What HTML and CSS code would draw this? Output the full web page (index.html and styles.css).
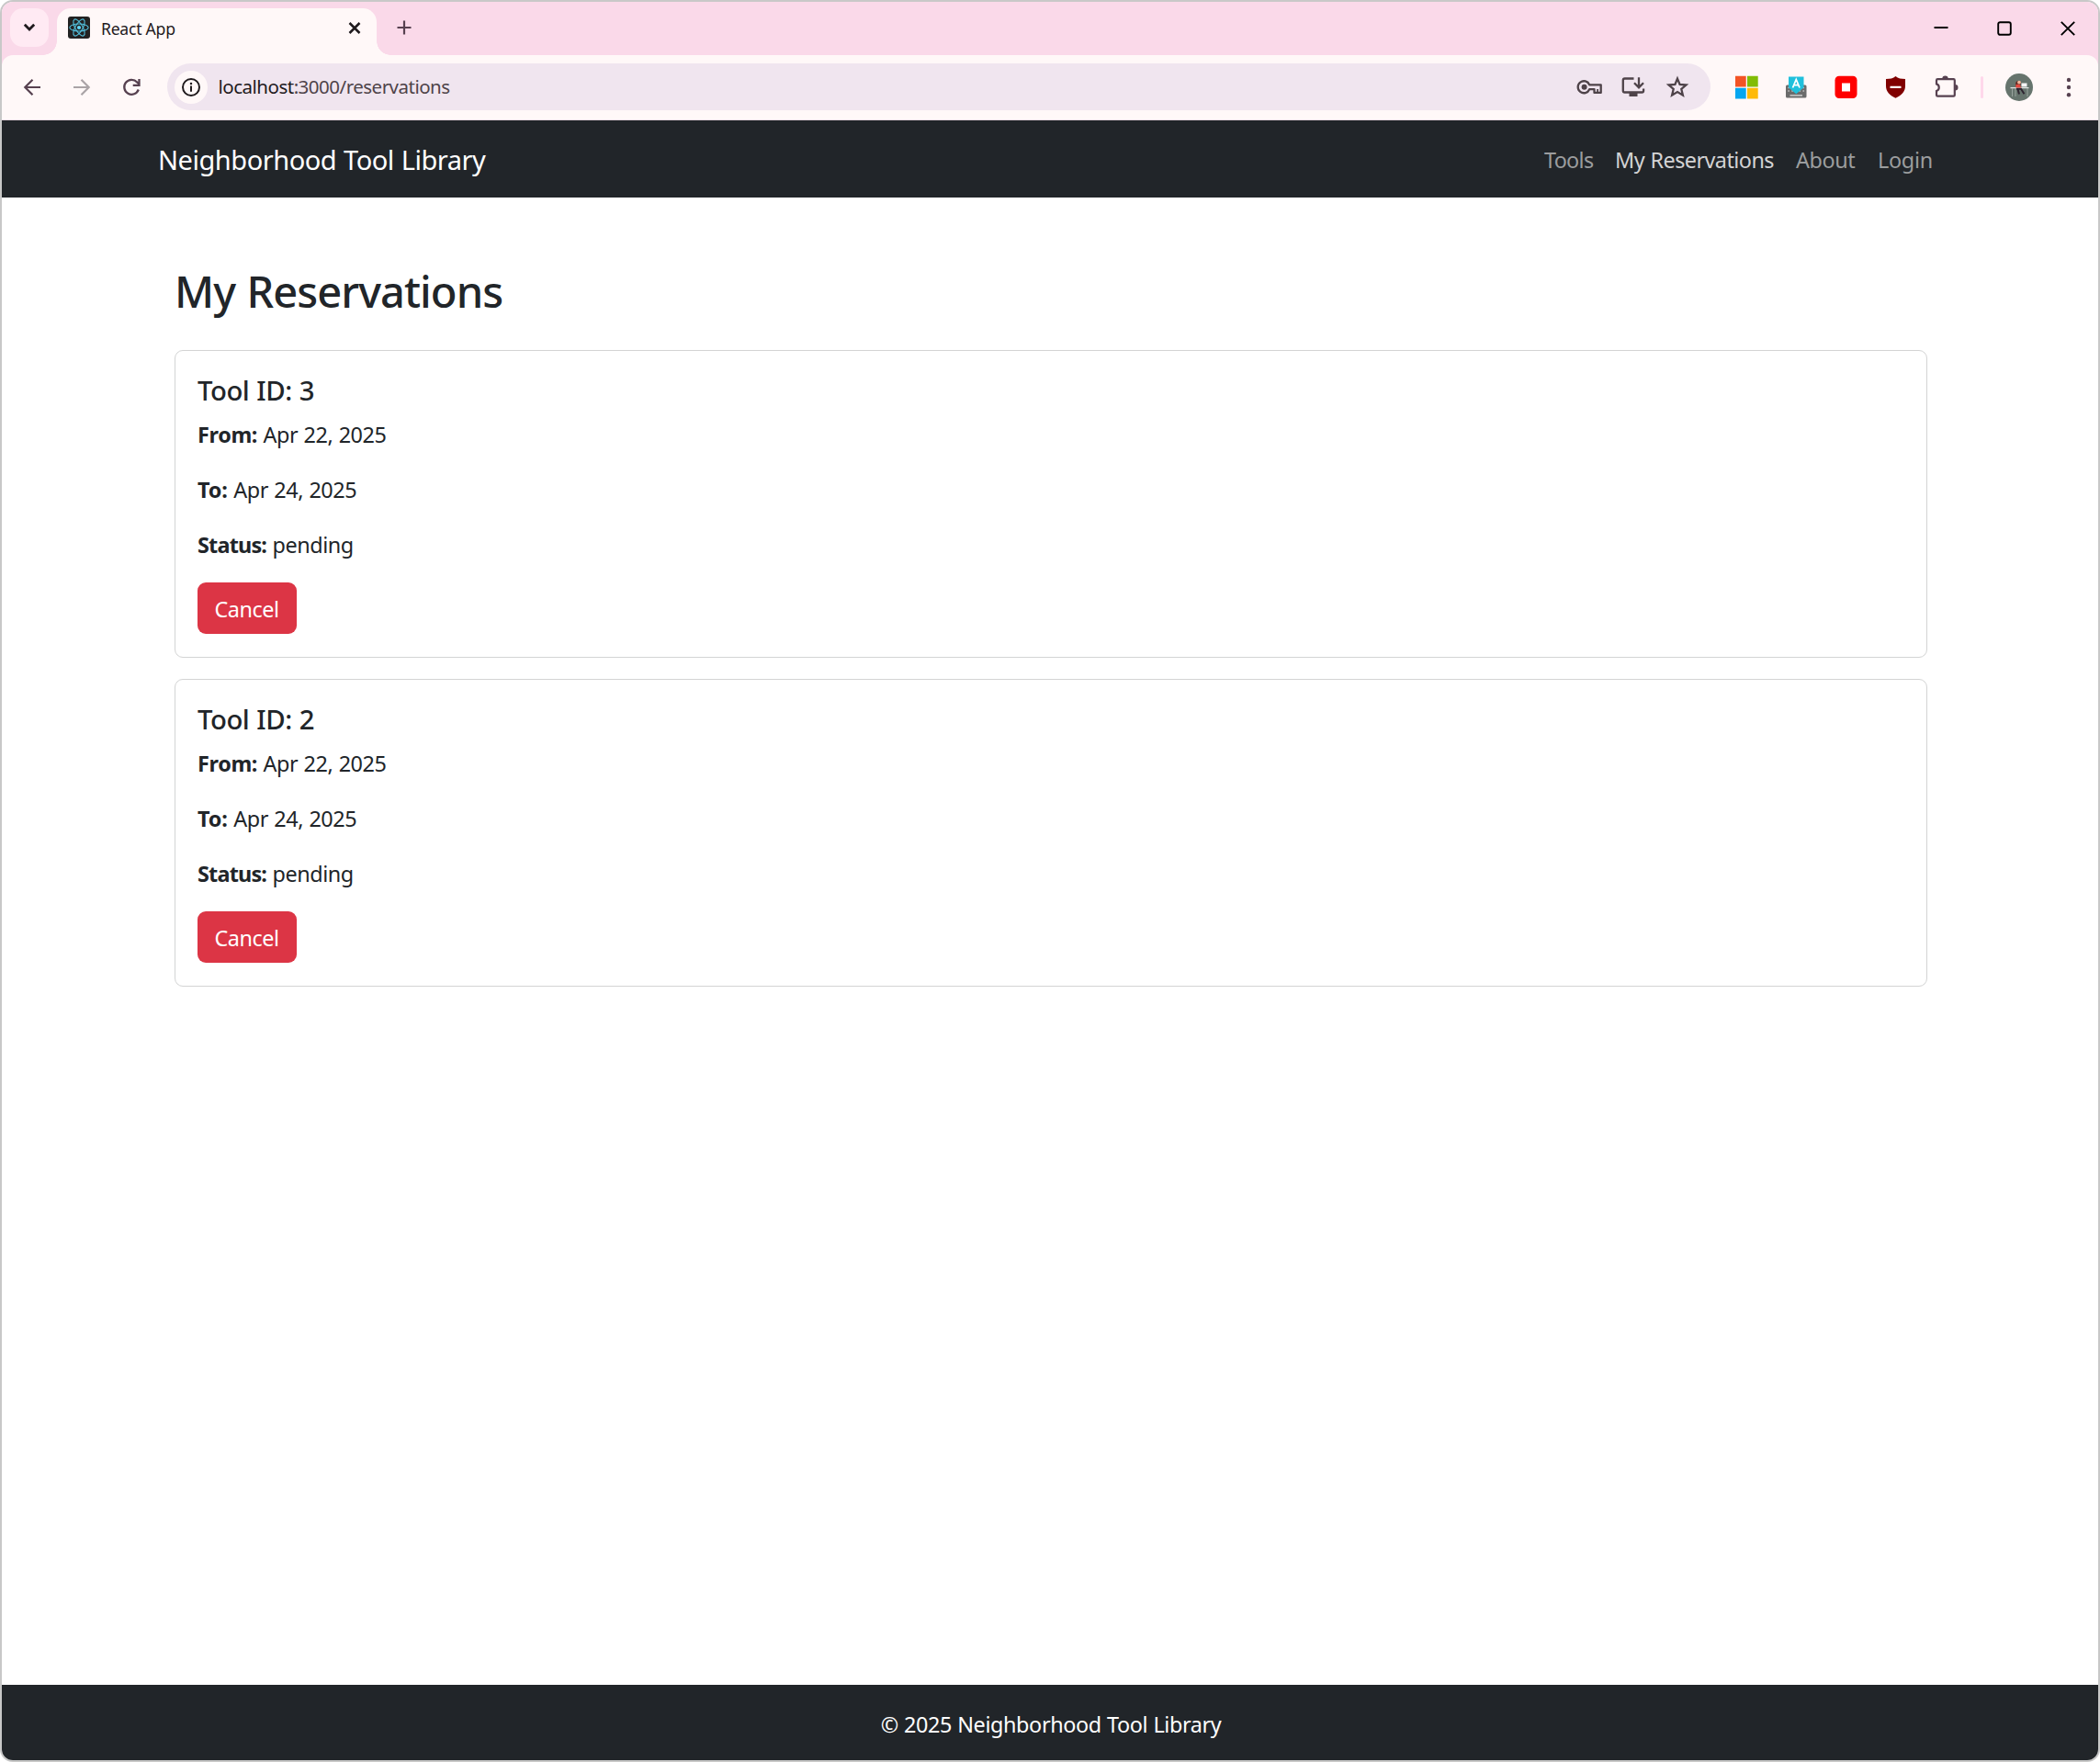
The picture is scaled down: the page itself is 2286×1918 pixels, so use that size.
FILE: index.html
```html
<!DOCTYPE html>
<html lang="en">
<head>
<meta charset="utf-8">
<title>React App</title>
<link rel="stylesheet" href="styles.css">
</head>
<body>
<div class="window">
  <div class="tabstrip">
    <div class="tab-search">
      <svg width="14" height="10" viewBox="0 0 14 10"><path d="M1.800 1.800 7 7l5.200-5.200" fill="none" stroke="#1f1a1d" stroke-width="2.800"/></svg>
    </div>
    <div class="tab">
      <svg class="favicon" width="24" height="24" viewBox="0 0 24 24">
        <rect width="24" height="24" rx="3" fill="#222"/>
        <g fill="none" stroke="#53c1de" stroke-width="1.100">
          <ellipse cx="12" cy="12" rx="10.200" ry="4"/>
          <ellipse cx="12" cy="12" rx="10.200" ry="4" transform="rotate(60 12 12)"/>
          <ellipse cx="12" cy="12" rx="10.200" ry="4" transform="rotate(120 12 12)"/>
        </g>
        <circle cx="12" cy="12" r="2.100" fill="#61dafb"/>
      </svg>
      <span class="tab-title">React App</span>
      <svg width="14" height="14" viewBox="0 0 14 14"><path d="m1.500 1 11 11m0-11-11 11" stroke="#1f1a1d" stroke-width="2.500"/></svg>
    </div>
    <svg class="new-tab" width="16" height="16" viewBox="0 0 16 16"><path d="M8 .500v15M.500 8h15" stroke="#574150" stroke-width="2.200"/></svg>
    <div class="window-controls">
      <svg width="16" height="16" viewBox="0 0 16 16"><path d="M.500 7h15" stroke="#000" stroke-width="2"/></svg>
      <svg width="16" height="16" viewBox="0 0 16 16"><rect x="1.200" y="1.200" width="13.600" height="13.600" rx="2" fill="none" stroke="#000" stroke-width="1.900"/></svg>
      <svg width="16" height="16" viewBox="0 0 16 16"><path d="m.800.800 14.400 14.400m0-14.400L.800 15.200" stroke="#000" stroke-width="1.900"/></svg>
    </div>
  </div>

  <div class="toolbar-bg">
  <div class="toolbar">
    <svg width="30" height="30" viewBox="0 0 30 30"><path d="M24 15H7.500M15.500 6.800 7.300 15l8.200 8.200" fill="none" stroke="#574150" stroke-width="2.200"/></svg>
    <svg width="30" height="30" viewBox="0 0 30 30"><path d="M6 15h16.500M14.500 6.800l8.200 8.200-8.200 8.200" fill="none" stroke="#aaa4a7" stroke-width="2.200"/></svg>
    <svg width="30" height="30" viewBox="0 0 30 30"><path d="M22.800 17.500A8 8 0 1 1 21.200 9.400L23.500 11.700" fill="none" stroke="#574150" stroke-width="2.300"/><path d="M23.500 6v6.800h-6.800" fill="none" stroke="#574150" stroke-width="2.300"/></svg>

    <div class="omnibox">
      <span class="site-info">
        <svg width="22" height="22" viewBox="0 0 22 22"><circle cx="11" cy="11" r="9" fill="none" stroke="#1f1a1d" stroke-width="2"/><path d="M11 9.600v6.200" stroke="#1f1a1d" stroke-width="2"/><circle cx="11" cy="6.900" r="1.250" fill="#1f1a1d"/></svg>
      </span>
      <span class="url"><span class="host">localhost</span>:3000/reservations</span>
      <div class="page-actions">
        <svg width="30" height="30" viewBox="0 0 30 30"><path d="M15.200 12.300A6.500 6.500 0 1 0 15.200 17.200H20.500V20.900H27.700V12.300Z" fill="none" stroke="#4e4349" stroke-width="2.300" stroke-linejoin="round"/><circle cx="9.600" cy="14.700" r="3" fill="#4e4349"/><path d="M24.100 17v4" stroke="#4e4349" stroke-width="1.800"/></svg>
        <svg width="30" height="30" viewBox="0 0 30 30"><path d="M15.500 5.500H5.600a1.800 1.800 0 0 0-1.800 1.800V18.700a1.800 1.800 0 0 0 1.800 1.800H24.300a1.800 1.800 0 0 0 1.800-1.800V16.500M21 4.300V14.500M16 10.300l5 5 5-5" fill="none" stroke="#4e4349" stroke-width="2.300"/><path d="M10.500 21h9v4h-9z" fill="#4e4349"/></svg>
        <svg width="30" height="30" viewBox="0 0 30 30"><path d="m15 5.600 2.600 6.300 6.900.6-5.200 4.500 1.600 6.700-5.900-3.600-5.900 3.600 1.600-6.700-5.200-4.500 6.900-.6Z" fill="none" stroke="#4e4349" stroke-width="2.300"/></svg>
      </div>
    </div>

    <svg width="30" height="30" viewBox="0 0 30 30"><path d="M3 2.700h11.700v11.700H3z" fill="#f35325"/><path d="M16 2.700h11.700v11.700H16z" fill="#81bc06"/><path d="M3 15.700h11.700v11.700H3z" fill="#05a6f0"/><path d="M16 15.700h11.700v11.700H16z" fill="#ffba08"/></svg>
    <svg width="30" height="30" viewBox="0 0 30 30"><rect x="4" y="12.500" width="22.500" height="14" rx="1.500" fill="#6b6b6b"/><path d="M8.500 23.800h13.500" stroke="#e0e0e0" stroke-width="1.300"/><path d="M6.300 15.500h1.600m14.600 0h1.600M6.300 19h1.600m2.400 0h1.600m6.600 0h1.600m2.400 0h1.600" stroke="#c0c0c0" stroke-width="1.600"/><path d="M7 3.500h16.500v11.800l-8.250 7-8.250-7z" fill="#20c0dc"/><path d="m11.500 15.500 3.750-9 3.750 9M12.900 12.600h4.700" fill="none" stroke="#fff" stroke-width="1.800"/></svg>
    <svg width="30" height="30" viewBox="0 0 30 30"><rect x="3.500" y="2.800" width="24" height="24.300" rx="4.500" fill="#f00"/><rect x="11" y="10.500" width="9" height="9" fill="#fff"/></svg>
    <svg width="30" height="30" viewBox="0 0 30 30"><path d="M15.500 3c2.800 2.400 6.200 3 10.500 3v7.500c0 6-3.800 10.200-10.500 13.300C8.800 23.700 5 19.500 5 13.500V6c4.300 0 7.700-.6 10.500-3Z" fill="#800000"/><path d="M9.500 14.800h12" stroke="#fff" stroke-width="2.200"/></svg>
    <svg width="30" height="30" viewBox="0 0 30 30"><path d="M7.300 6.200H24.500a1.300 1.300 0 0 1 1.300 1.300V23.400a1.300 1.300 0 0 1-1.300 1.300H7.300a1.300 1.300 0 0 1-1.300-1.300V19a4 4 0 0 0 0-7.600V7.500a1.300 1.300 0 0 1 1.300-1.300Z" fill="none" stroke="#574150" stroke-width="2.200"/><path d="M12.300 5.700a3.200 3.200 0 0 1 6.400 0ZM26.300 12a3.200 3.200 0 0 1 0 6.400Z" fill="#574150"/></svg>
    <span class="divider"></span>
    <svg width="30" height="30" viewBox="0 0 30 30"><circle cx="15" cy="15" r="15" fill="#66746d"/><path d="M5.500 15.700h20" stroke="#dfe4e1" stroke-width="1.300"/><path d="M7.500 16v9M24 16v9M11 16v9" stroke="#98a39e" stroke-width="1"/><path d="M11.200 10a3.200 3.200 0 0 1 6 0l-1 3.500h-5z" fill="#6a2a22"/><circle cx="15" cy="9.700" r="1.900" fill="#f0b79c"/><path d="M11.500 12h4l2 3.500h-6.200z" fill="#e5483f"/><path d="M12 16.800h5l3.500 5.500M13.500 17l1.500 5.500" fill="none" stroke="#2e2530" stroke-width="2"/><path d="M17.500 10.500h6v4h-6z" fill="#f5f5f5"/></svg>
    <svg width="30" height="30" viewBox="0 0 30 30"><g fill="#574150"><circle cx="15" cy="7" r="2.200"/><circle cx="15" cy="15" r="2.200"/><circle cx="15" cy="23.200" r="2.200"/></g></svg>
  </div>
  </div>

  <nav class="navbar">
    <div class="navbar-inner">
      <span class="brand">Neighborhood Tool Library</span>
      <div class="nav-links">
        <a class="nav-link tools">Tools</a>
        <a class="nav-link reservations active">My Reservations</a>
        <a class="nav-link about">About</a>
        <a class="nav-link login">Login</a>
      </div>
    </div>
  </nav>

  <main class="content">
    <h1>My Reservations</h1>
    <section class="card">
      <h5>Tool ID: 3</h5>
      <p><strong class="from">From:</strong> Apr 22, 2025</p>
      <p><strong class="to">To:</strong> Apr 24, 2025</p>
      <p><strong class="status">Status:</strong> pending</p>
      <button class="cancel">Cancel</button>
    </section>
    <section class="card">
      <h5>Tool ID: 2</h5>
      <p><strong class="from">From:</strong> Apr 22, 2025</p>
      <p><strong class="to">To:</strong> Apr 24, 2025</p>
      <p><strong class="status">Status:</strong> pending</p>
      <button class="cancel">Cancel</button>
    </section>
  </main>

  <footer class="footer">© 2025 Neighborhood Tool Library</footer>
</div>
</body>
</html>
```
FILE: styles.css
```css
* { box-sizing: border-box; }

body {
  margin: 0;
  background: #fff;
  color: #212529;
  font: 23.4px/36px "Noto Sans", "Open Sans", sans-serif;
}

svg { display: block; flex: none; }

.window {
  display: flex;
  flex-direction: column;
  height: 1918px;
  border: 2px solid #c8c8c8;
  border-radius: 14px;
  overflow: hidden;
  background: #fff;
}

/* Tab strip */
.tabstrip {
  display: flex;
  height: 58px;
  padding: 7px 25px 0 9px;
  background: #fad9e9;
}

.tab-search {
  display: flex;
  align-items: center;
  justify-content: center;
  width: 42px;
  height: 42px;
  margin-right: 9px;
  border-radius: 14px;
  background: #ffeaf3;
}

.tab {
  position: relative;
  display: flex;
  align-items: flex-start;
  width: 348px;
  padding: 15px 17px 0 12px;
  border-radius: 15px 15px 0 0;
  background: #fff8f8;
}

.tab::before,
.tab::after {
  content: "";
  position: absolute;
  bottom: 0;
  width: 15px;
  height: 15px;
}

.tab::before {
  left: -15px;
  background: radial-gradient(circle at 0 0, transparent 14.5px, #fff8f8 15px);
}

.tab::after {
  right: -15px;
  background: radial-gradient(circle at 100% 0, transparent 14.5px, #fff8f8 15px);
}

.favicon { margin-top: -6px; }

.tab-title {
  flex: 1;
  margin: -5px 0 0 12px;
  color: #1f1a1d;
  font-size: 17.6px;
  line-height: 24px;
  letter-spacing: -0.25px;
}

.new-tab { margin: 13px 0 0 22px; }

.window-controls {
  display: flex;
  gap: 53px;
  margin: 14px 0 0 auto;
}

/* Toolbar */
.toolbar-bg { background: #fad9e9; }

.toolbar {
  display: flex;
  align-items: center;
  gap: 24px;
  height: 71px;
  padding: 0 17px 1px 18px;
  border-bottom: 1px solid #f0dee6;
  border-radius: 12px 12px 0 0;
  background: #fff8f8;
}

.omnibox {
  display: flex;
  flex: 1;
  align-items: center;
  height: 51px;
  padding: 0 21px 0 7.5px;
  border-radius: 26px;
  background: #f0e5ef;
}

.site-info {
  display: flex;
  align-items: center;
  justify-content: center;
  width: 36px;
  height: 36px;
  border-radius: 50%;
  background: #fff8f8;
}

.url {
  margin-left: 12px;
  padding-bottom: 2px;
  color: #4e4349;
  font-size: 20.5px;
  letter-spacing: -0.5px;
}

.host { color: #1f1a1d; }

.page-actions {
  display: flex;
  gap: 18px;
  margin-left: auto;
}

.divider {
  width: 3px;
  height: 24px;
  border-radius: 2px;
  background: #ffd8eb;
}

/* Site header */
.navbar {
  height: 84px;
  background: #212529;
}

.navbar-inner {
  display: flex;
  align-items: center;
  justify-content: space-between;
  width: 1980px;
  height: 84px;
  margin: 0 auto;
  padding: 0 24px 0 18px;
}

.brand {
  padding: 1px 0 0 1px;
  color: #fff;
  font-size: 29px;
  letter-spacing: -0.47px;
  word-spacing: 0.8px;
}

.nav-links {
  display: flex;
  margin-right: -6px;
  padding-top: 2px;
}

.nav-link {
  box-sizing: content-box;
  padding: 0 12px;
  color: #9b9d9e;
  letter-spacing: -0.4px;
  white-space: nowrap;
}

.tools { width: 53px; letter-spacing: -0.7px; }
.reservations { width: 173px; letter-spacing: -0.56px; word-spacing: 1px; }
.about { width: 65px; }
.login { width: 59px; letter-spacing: -0.3px; }
.active { color: #d3d3d4; }

/* Reservations */
.content {
  flex: 1;
  padding: 73px 186px 0 188px;
}

h1 {
  margin: 0 0 35px;
  font-size: 47px;
  font-weight: 500;
  line-height: 58px;
  letter-spacing: -0.92px;
  word-spacing: 1px;
}

.card {
  height: 335px;
  margin-bottom: 23px;
  padding: 25px 24px 24px;
  border: 1px solid #d3d4d4;
  border-radius: 9px;
}

h5 {
  margin: 0 0 12px;
  font-size: 29.3px;
  font-weight: 500;
  line-height: 36px;
  letter-spacing: -0.45px;
  word-spacing: 0.8px;
}

p {
  margin: 0 0 24px;
  letter-spacing: -0.45px;
  word-spacing: 0.8px;
}

strong { font-weight: 700; }
.from { letter-spacing: -0.35px; }
.to { letter-spacing: -0.1px; }
.status { letter-spacing: -0.8px; }

.cancel {
  display: block;
  width: 108px;
  height: 56px;
  margin-top: -1px;
  padding: 2px 1px 0 0;
  border: 0;
  border-radius: 9px;
  background: #dc3545;
  color: #fff;
  font: inherit;
  letter-spacing: -0.44px;
}

.footer {
  height: 82px;
  padding: 25px 0 0 2px;
  background: #212529;
  color: #fff;
  text-align: center;
  letter-spacing: -0.38px;
  word-spacing: 0.5px;
}
```
